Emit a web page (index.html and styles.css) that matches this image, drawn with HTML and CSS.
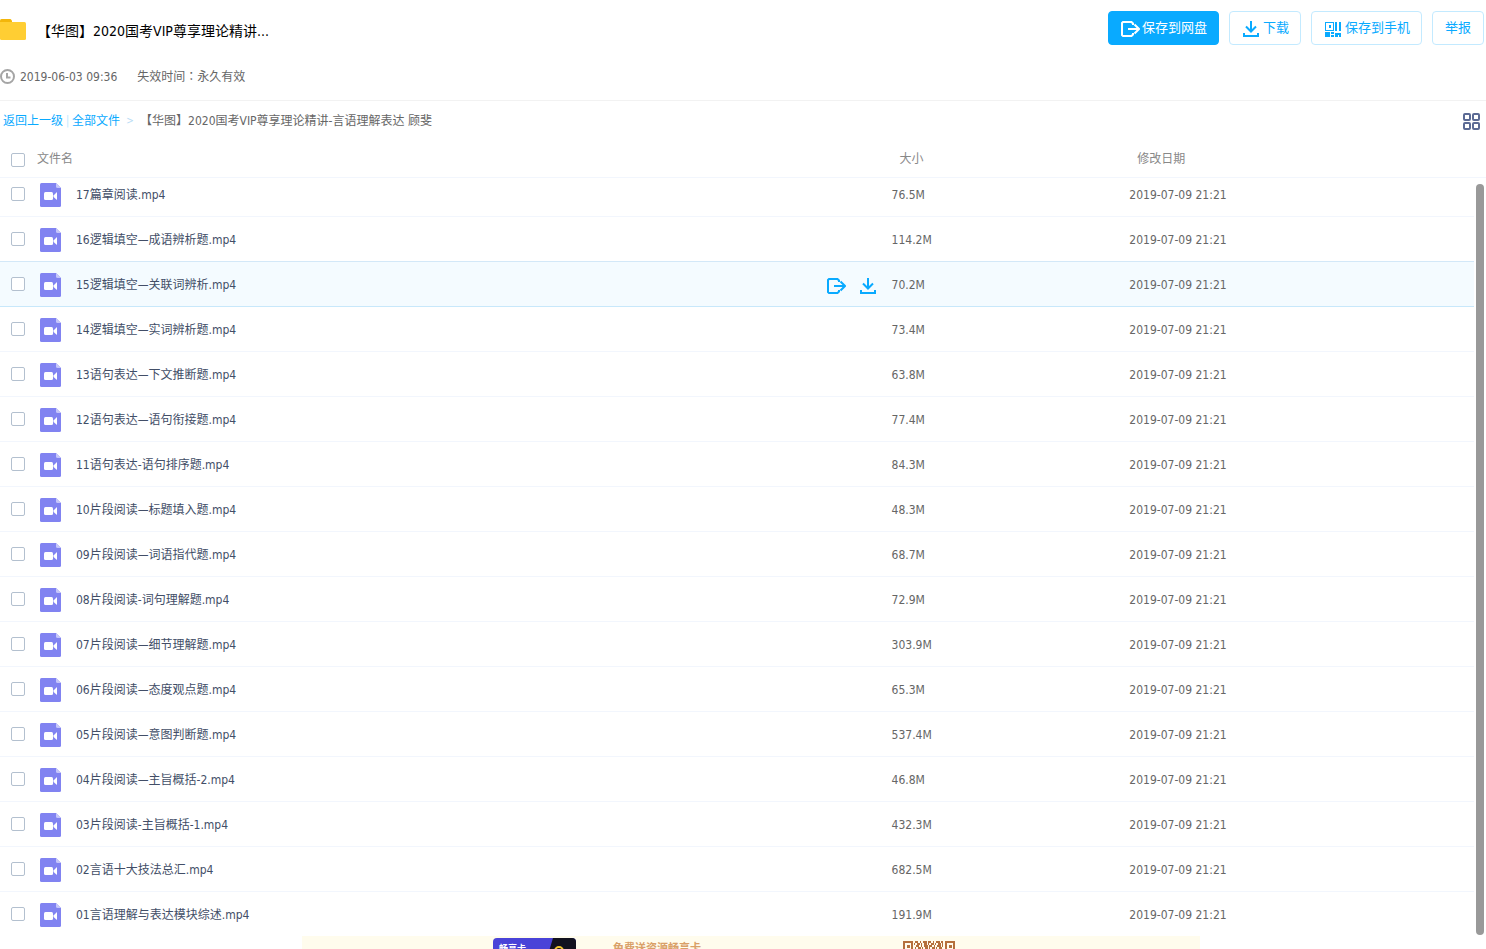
FILE: index.html
```html
<!DOCTYPE html>
<html lang="zh-CN">
<head>
<meta charset="utf-8">
<meta name="viewport" content="width=device-width, initial-scale=1">
<title>【华图】2020国考VIP尊享理论精讲</title>
<link rel="stylesheet" href="styles.css">
</head>
<body>
<svg class="sprite" aria-hidden="true">
  <symbol id="video" viewBox="0 0 21 24">
    <path fill="#8183f1" d="M1.500 0H16l5 5v17.500q0 1.500-1.500 1.500h-18Q0 24 0 22.500v-21Q0 0 1.500 0z"/>
    <path fill="#c5c6fa" d="M16 0l5 5h-3.500Q16 5 16 3.500z"/>
    <rect fill="#fff" x="4" y="9" width="9" height="8" rx="1.500"/>
    <path fill="#fff" d="M13.500 12.500L17 9v8l-3.500-3z"/>
  </symbol>
  <symbol id="save" viewBox="0 0 19 16">
    <g fill="none" stroke="currentColor" stroke-width="2">
      <path d="M12 4V2.500L10.500 1H2L1 2v12l1 1h8.500l1.500-1.500V12"/>
      <path d="M7 8h11M13.500 3.500L18 8l-4.500 4.500"/>
    </g>
  </symbol>
  <symbol id="down" viewBox="0 0 16 16">
    <g fill="none" stroke="currentColor" stroke-width="2">
      <path d="M8 0v10M3 5.500l5 5 5-5M1 12v3h14v-3"/>
    </g>
  </symbol>
  <symbol id="qr" viewBox="0 0 16 15">
    <path fill="currentColor" fill-rule="evenodd" d="M0 0h9v9H0zM1 1v7h7V1zM4 3h2v3H4zM10 0h2v9h-2zM14 0h2v9h-2zM0 10h5v5H0zM6 10h3v2H6zM6 13h3v2H6zM10 11h6v4h-2v-2h-1v2h-3z"/>
  </symbol>
</svg>

<header class="share-head">
  <div class="title-row">
    <svg class="folder" viewBox="0 0 26 21" aria-hidden="true"><path fill="#f3b60b" d="M0 1.500Q0 0 1.500 0h9L12 1.500V6H0z"/><path fill="#ffce33" d="M0 3h24.500Q26 3 26 4.500v15q0 1.500-1.500 1.500h-23Q0 21 0 19.500z"/></svg>
    <h1 class="title">【华图】2020国考VIP尊享理论精讲...</h1>
    <div class="buttons">
      <button class="btn btn-primary" type="button"><svg class="ico-save" aria-hidden="true"><use href="#save"/></svg>保存到网盘</button>
      <button class="btn btn-icon" type="button"><svg class="ico-down" aria-hidden="true"><use href="#down"/></svg>下载</button>
      <button class="btn btn-icon" type="button"><svg class="ico-qr" aria-hidden="true"><use href="#qr"/></svg>保存到手机</button>
      <button class="btn" type="button">举报</button>
    </div>
  </div>
  <div class="meta">
    <svg class="clock" viewBox="0 0 15 15" aria-hidden="true"><circle cx="7.500" cy="7.500" r="6.500" fill="none" stroke="#a5a5a5" stroke-width="2"/><path d="M7 4v4.500h3.500" fill="none" stroke="#a5a5a5" stroke-width="2"/></svg>
    <time>2019-06-03 09:36</time>
    <span class="expire">失效时间<span class="mid" lang="zh-TW">：</span>永久有效</span>
  </div>
</header>

<nav class="crumbs">
  <a href="#">返回上一级</a><span class="bar">|</span><a href="#">全部文件</a><span class="sep">&gt;</span><span>【华图】2020国考VIP尊享理论精讲-言语理解表达 顾斐</span>
  <button class="grid-btn" type="button" aria-label="网格视图"><svg viewBox="0 0 17 17" aria-hidden="true"><g fill="none" stroke="#5b6a94" stroke-width="2"><rect x="1" y="1" width="6" height="6" rx="1"/><rect x="10" y="1" width="6" height="6" rx="1"/><rect x="1" y="10" width="6" height="6" rx="1"/><rect x="10" y="10" width="6" height="6" rx="1"/></g></svg></button>
</nav>

<main class="list">
<table class="files">
<colgroup><col class="c-name"><col class="c-size"><col><col class="c-gutter"></colgroup>
<thead><tr><th><div class="head"><input type="checkbox" id="all"><label for="all">文件名</label></div></th><th class="num">大小</th><th class="num">修改日期</th><th></th></tr></thead>
<tbody>
<tr><td><div class="file"><input type="checkbox" id="f17"><svg class="vid"><use href="#video"/></svg><label for="f17">17篇章阅读.mp4</label></div></td><td>76.5M</td><td>2019-07-09 21:21</td></tr>
<tr><td><div class="file"><input type="checkbox" id="f16"><svg class="vid"><use href="#video"/></svg><label for="f16">16逻辑填空—成语辨析题.mp4</label></div></td><td>114.2M</td><td>2019-07-09 21:21</td></tr>
<tr class="active"><td><div class="file"><input type="checkbox" id="f15"><svg class="vid"><use href="#video"/></svg><label for="f15">15逻辑填空—关联词辨析.mp4</label><span class="actions"><button type="button" aria-label="保存到网盘"><svg class="ico-save"><use href="#save"/></svg></button><button type="button" aria-label="下载"><svg class="ico-down"><use href="#down"/></svg></button></span></div></td><td>70.2M</td><td>2019-07-09 21:21</td></tr>
<tr><td><div class="file"><input type="checkbox" id="f14"><svg class="vid"><use href="#video"/></svg><label for="f14">14逻辑填空—实词辨析题.mp4</label></div></td><td>73.4M</td><td>2019-07-09 21:21</td></tr>
<tr><td><div class="file"><input type="checkbox" id="f13"><svg class="vid"><use href="#video"/></svg><label for="f13">13语句表达—下文推断题.mp4</label></div></td><td>63.8M</td><td>2019-07-09 21:21</td></tr>
<tr><td><div class="file"><input type="checkbox" id="f12"><svg class="vid"><use href="#video"/></svg><label for="f12">12语句表达—语句衔接题.mp4</label></div></td><td>77.4M</td><td>2019-07-09 21:21</td></tr>
<tr><td><div class="file"><input type="checkbox" id="f11"><svg class="vid"><use href="#video"/></svg><label for="f11">11语句表达-语句排序题.mp4</label></div></td><td>84.3M</td><td>2019-07-09 21:21</td></tr>
<tr><td><div class="file"><input type="checkbox" id="f10"><svg class="vid"><use href="#video"/></svg><label for="f10">10片段阅读—标题填入题.mp4</label></div></td><td>48.3M</td><td>2019-07-09 21:21</td></tr>
<tr><td><div class="file"><input type="checkbox" id="f09"><svg class="vid"><use href="#video"/></svg><label for="f09">09片段阅读—词语指代题.mp4</label></div></td><td>68.7M</td><td>2019-07-09 21:21</td></tr>
<tr><td><div class="file"><input type="checkbox" id="f08"><svg class="vid"><use href="#video"/></svg><label for="f08">08片段阅读-词句理解题.mp4</label></div></td><td>72.9M</td><td>2019-07-09 21:21</td></tr>
<tr><td><div class="file"><input type="checkbox" id="f07"><svg class="vid"><use href="#video"/></svg><label for="f07">07片段阅读—细节理解题.mp4</label></div></td><td>303.9M</td><td>2019-07-09 21:21</td></tr>
<tr><td><div class="file"><input type="checkbox" id="f06"><svg class="vid"><use href="#video"/></svg><label for="f06">06片段阅读—态度观点题.mp4</label></div></td><td>65.3M</td><td>2019-07-09 21:21</td></tr>
<tr><td><div class="file"><input type="checkbox" id="f05"><svg class="vid"><use href="#video"/></svg><label for="f05">05片段阅读—意图判断题.mp4</label></div></td><td>537.4M</td><td>2019-07-09 21:21</td></tr>
<tr><td><div class="file"><input type="checkbox" id="f04"><svg class="vid"><use href="#video"/></svg><label for="f04">04片段阅读—主旨概括-2.mp4</label></div></td><td>46.8M</td><td>2019-07-09 21:21</td></tr>
<tr><td><div class="file"><input type="checkbox" id="f03"><svg class="vid"><use href="#video"/></svg><label for="f03">03片段阅读-主旨概括-1.mp4</label></div></td><td>432.3M</td><td>2019-07-09 21:21</td></tr>
<tr><td><div class="file"><input type="checkbox" id="f02"><svg class="vid"><use href="#video"/></svg><label for="f02">02言语十大技法总汇.mp4</label></div></td><td>682.5M</td><td>2019-07-09 21:21</td></tr>
<tr><td><div class="file"><input type="checkbox" id="f01"><svg class="vid"><use href="#video"/></svg><label for="f01">01言语理解与表达模块综述.mp4</label></div></td><td>191.9M</td><td>2019-07-09 21:21</td></tr>
</tbody>
</table>
<div class="scrollbar"></div>
</main>

<aside class="ad">
  <div class="banner">
    <div class="card">畅享卡<svg class="card-art" viewBox="0 0 28 50" aria-hidden="true"><path fill="#12121f" d="M5 0h23v50H-10z"/><circle cx="11" cy="13" r="4" fill="none" stroke="#f2c62e" stroke-width="2"/></svg></div>
    <p class="slogan">免费送资源畅享卡</p>
    <svg class="code" viewBox="0 0 52 52" aria-hidden="true"><g fill="none" stroke="#b5703c" stroke-width="2"><path d="M1 1h8v8H1zM43 1h8v8h-8zM1 43h8v8H1z"/><path stroke-dasharray="3 2 1 2 4 1" d="M12 1h28M13 5h27M11 9h30M12 13h28"/><path stroke-dasharray="1 2 3 1" d="M11 3h29M12 7h28M12 11h29"/></g><path fill="#b5703c" d="M4 4h3v3H4zM46 4h3v3h-3z"/></svg>
  </div>
</aside>
</body>
</html>
```
FILE: styles.css
```css
* { box-sizing: border-box; }
body {
  margin: 0;
  height: 100vh;
  overflow: hidden;
  background: #fff;
  color: #666;
  font: 12px/18px "DejaVu Sans Condensed", "Noto Sans CJK SC", sans-serif;
}
button { font: inherit; cursor: pointer; }
svg { display: block; flex: none; }
.sprite { position: absolute; width: 0; height: 0; }

.share-head { border-bottom: 1px solid #f2f2f2; height: 101px; padding-top: 11px; }
.title-row { display: flex; align-items: flex-start; padding-right: 2px; }
.folder { width: 26px; height: 21px; margin-top: 8px; }
.title { margin: 10px 0 0 11px; font-size: 14px; line-height: 20px; font-weight: 400; color: #000; }
.buttons { display: flex; gap: 10px; margin-left: auto; }
.btn {
  display: flex;
  align-items: center;
  height: 34px;
  padding: 0 12px;
  border: 1px solid #c3eaff;
  border-radius: 4px;
  background: #fff;
  color: #09aaff;
  font-size: 13px;
}
.btn svg { margin-top: 2px; }
.btn-primary { gap: 2px; padding: 0 11px 0 12px; border-color: #09aaff; background: #09aaff; color: #fff; }
.btn-icon { gap: 4px; padding: 0 11px 0 13px; }
.ico-save { width: 19px; height: 16px; }
.ico-down { width: 16px; height: 16px; }
.ico-qr { width: 16px; height: 15px; }
.meta { display: flex; align-items: center; margin-top: 22px; }
.clock { width: 15px; height: 15px; margin-right: 5px; }
.expire { margin-left: 20px; }
.mid { font-family: "Noto Sans CJK TC", sans-serif; }

.crumbs { display: flex; align-items: center; height: 39px; padding: 0 6px 0 3px; }
.crumbs a { color: #09aaff; text-decoration: none; }
.bar { width: 9px; text-align: center; color: #c3eaff; }
.sep { width: 20px; text-align: center; color: #b9dcf5; font-size: 10px; }
.grid-btn { width: 17px; height: 17px; margin: 2px 0 0 auto; padding: 0; border: 0; background: none; }

.list { position: relative; }
.files { width: 100%; table-layout: fixed; border-spacing: 0; }
.c-name { width: 60%; }
.c-size { width: 16%; }
.c-gutter { width: 12px; }
th, td { padding: 0; text-align: left; font-weight: 400; border-bottom: 1px solid #f2f6fd; }
th { height: 38px; color: #888; }
th.num { padding-left: 8px; }
td { height: 45px; padding-top: 2px; }
tbody tr:first-child td { height: 39px; padding: 0 0 4px; }
tbody tr:last-child td { height: 44px; border-bottom: 0; }
.head, .file { display: flex; align-items: center; padding-left: 11px; }
.head { gap: 12px; }
.file { gap: 15px; padding-right: 16px; color: #424e67; }
input[type="checkbox"] {
  appearance: none;
  flex: none;
  width: 14px;
  height: 14px;
  margin: 0;
  border: 1px solid #b3c0cf;
  border-radius: 2px;
  background: #fff;
}
.head input[type="checkbox"] { margin-top: 2px; }
.file input[type="checkbox"] { margin-bottom: 2px; }
.vid { width: 21px; height: 24px; }
.active td { background: #f4fbff; border-bottom-color: #c8e8fb; }
tr:has(+ .active) td { border-bottom-color: #d3e8f8; }
.actions { display: flex; gap: 14px; margin: 2px 0 0 auto; color: #09aaff; }
.actions button { padding: 0; border: 0; background: none; color: inherit; }
.scrollbar {
  position: absolute;
  top: 44px;
  right: 2px;
  bottom: 1px;
  width: 8px;
  border-radius: 4px;
  background: #999;
}

.ad { padding-left: 16px; }
.banner {
  display: flex;
  align-items: flex-start;
  max-width: 898px;
  height: 70px;
  margin: 0 auto;
  padding: 2px 245px 0 191px;
  background: #fffced;
}
.card {
  display: flex;
  justify-content: space-between;
  width: 83px;
  height: 50px;
  padding-left: 6px;
  border-radius: 4px;
  overflow: hidden;
  background: #4a43d8;
  color: #fff;
  font-size: 9px;
  font-weight: 700;
  line-height: 22px;
}
.card-art { width: 28px; height: 50px; }
.slogan { margin: 2px 0 0 37px; color: #d9a068; font-size: 11px; font-weight: 700; }
.code { width: 52px; height: 52px; margin: 3px 0 0 auto; }
```
